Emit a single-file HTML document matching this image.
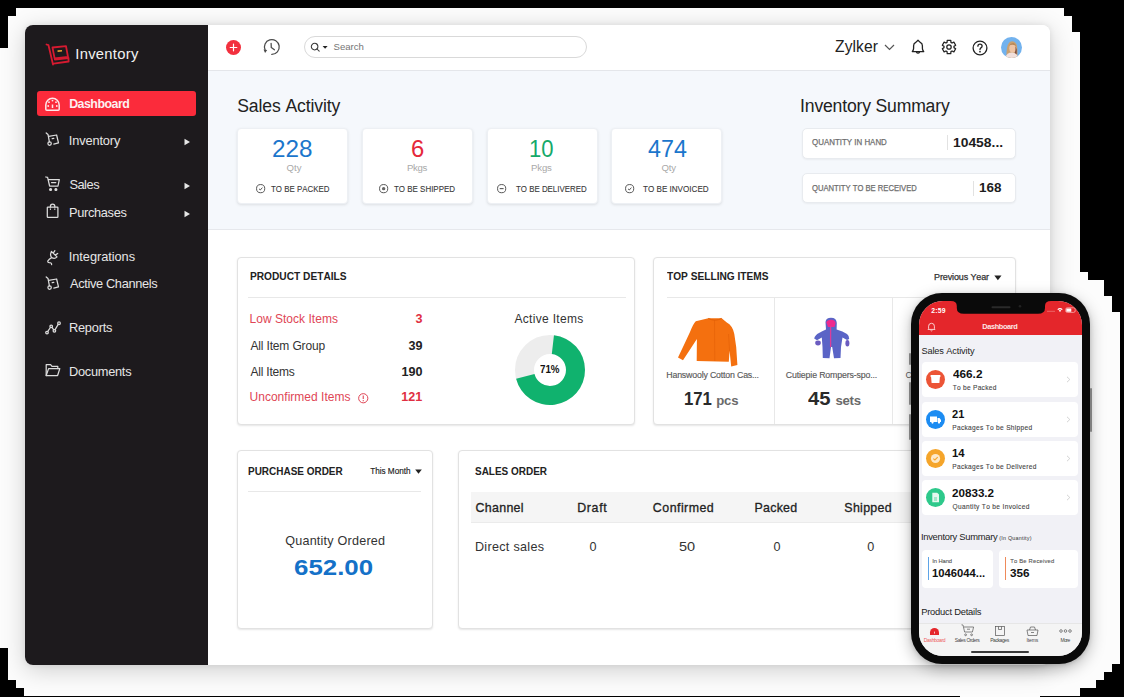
<!DOCTYPE html>
<html><head><meta charset="utf-8"><style>
*{box-sizing:border-box}
html,body{margin:0;padding:0}
body{width:1124px;height:697px;overflow:hidden;background:#fcfcfc;position:relative;font-family:"Liberation Sans",sans-serif}
.a{position:absolute}
.t{position:absolute;white-space:nowrap;line-height:1.117;font-kerning:none;font-family:"Liberation Sans",sans-serif}
svg{position:absolute;overflow:visible}
</style></head><body>
<div class="a" id="win" style="left:25px;top:25px;width:1025px;height:640px;background:#fff;border-radius:8px;box-shadow:0 5px 24px rgba(0,0,0,0.19),0 0 6px rgba(0,0,0,0.08);overflow:hidden"><div class="a" style="left:0px;top:0px;width:183px;height:640px;background:#1d1a1d"></div>
<div class="a" style="left:183px;top:0px;width:842px;height:46px;background:#fff;border-bottom:1px solid #e4e6ea"></div>
<div class="a" style="left:183px;top:46px;width:842px;height:159px;background:#f5f8fc;border-bottom:1px solid #e6e8ec"></div>
</div><svg style="left:44px;top:42px" width="28" height="28" viewBox="0 0 28 28">
<g fill="none" stroke="#d61a30" stroke-width="1.8" stroke-linejoin="round" stroke-linecap="round">
<path d="M2.5 2.5 L4.5 3.2 L9 22.5"/>
<path d="M8.5 5.5 L22 4.2 L24 15 L10.6 16.4 Z"/>
<path d="M10.8 17.5 L24.5 16 L24.6 19.5 L9.6 21.6"/>
</g>
<path d="M13.5 8.3 L18 7.9 L18.1 9.6 L13.6 10 Z" fill="#e8a030"/>
</svg><div class="t" style="left:75.33px;top:46.00px;font-size:14.8px;color:#f2f2f2;letter-spacing:0.265px;">Inventory</div>
<div class="a" style="left:37px;top:91px;width:159px;height:25px;background:#fb2b3b;border-radius:3px"></div>
<svg style="left:44px;top:96px" width="17" height="16" viewBox="0 0 17 16">
<g fill="none" stroke="#fde8ea" stroke-width="1.5">
<path d="M1.8 13.2 L1.8 9 A6.7 6.7 0 0 1 15.2 9 L15.2 13.2 Q15.2 14.2 14.2 14.2 L2.8 14.2 Q1.8 14.2 1.8 13.2 Z"/>
<path d="M8.5 8.5 L8.5 12"/>
</g>
<g fill="#fde8ea"><circle cx="8.5" cy="4.6" r="0.9"/><circle cx="5" cy="6.2" r="0.9"/><circle cx="12" cy="6.2" r="0.9"/><circle cx="4.2" cy="10" r="0.9"/><circle cx="12.8" cy="10" r="0.9"/></g>
</svg><div class="t" style="left:69.17px;top:98.00px;font-size:12.4px;color:#fdf0f1;font-weight:700;letter-spacing:-0.515px;">Dashboard</div>
<div class="t" style="left:68.82px;top:134.00px;font-size:12.8px;color:#e6e6e6;letter-spacing:-0.143px;">Inventory</div>
<svg style="left:184px;top:137.5px" width="7" height="8" viewBox="0 0 7 8"><path d="M0.5 0.8 L6 4 L0.5 7.2 Z" fill="#e6e6e6"/></svg>
<div class="t" style="left:69.42px;top:178.00px;font-size:12.8px;color:#e6e6e6;letter-spacing:-0.469px;">Sales</div>
<svg style="left:184px;top:181.5px" width="7" height="8" viewBox="0 0 7 8"><path d="M0.5 0.8 L6 4 L0.5 7.2 Z" fill="#e6e6e6"/></svg>
<div class="t" style="left:68.95px;top:206.00px;font-size:12.8px;color:#e6e6e6;letter-spacing:-0.320px;">Purchases</div>
<svg style="left:184px;top:209.5px" width="7" height="8" viewBox="0 0 7 8"><path d="M0.5 0.8 L6 4 L0.5 7.2 Z" fill="#e6e6e6"/></svg>
<div class="t" style="left:68.82px;top:250.00px;font-size:12.8px;color:#e6e6e6;letter-spacing:-0.059px;">Integrations</div>
<div class="t" style="left:69.97px;top:277.00px;font-size:12.8px;color:#e6e6e6;letter-spacing:-0.343px;">Active Channels</div>
<div class="t" style="left:68.95px;top:321.00px;font-size:12.8px;color:#e6e6e6;letter-spacing:-0.218px;">Reports</div>
<div class="t" style="left:68.95px;top:365.00px;font-size:12.8px;color:#e6e6e6;letter-spacing:-0.266px;">Documents</div>
<svg style="left:43px;top:130px" width="20" height="20" viewBox="0 0 20 20"><g fill="none" stroke="#dcdcdc" stroke-width="1.25" stroke-linecap="round" stroke-linejoin="round"><path d="M3.2 2.9 L5 4.4 L6.4 11.8"/><circle cx="6.6" cy="13.6" r="1.7"/><path d="M5.7 6.4 L13.6 5 L15.5 12.9 L10.8 14.2"/><path d="M9.2 8.7 L10.8 8.4"/></g></svg>
<svg style="left:43px;top:274px" width="20" height="20" viewBox="0 0 20 20"><g fill="none" stroke="#dcdcdc" stroke-width="1.25" stroke-linecap="round" stroke-linejoin="round"><path d="M3.2 2.9 L5 4.4 L6.4 11.8"/><circle cx="6.6" cy="13.6" r="1.7"/><path d="M5.7 6.4 L13.6 5 L15.5 12.9 L10.8 14.2"/><path d="M9.2 8.7 L10.8 8.4"/></g></svg>
<svg style="left:45px;top:175.5px" width="16" height="16" viewBox="0 0 16 16"><g fill="none" stroke="#dcdcdc" stroke-width="1.25" stroke-linecap="round" stroke-linejoin="round"><path d="M0.8 1 L2.6 1.3 L4.6 10 L13 10 L14.3 3.6 L3.4 3.6"/><path d="M6.5 6.6 L10.8 6.6"/><circle cx="5.6" cy="13.5" r="0.95" fill="#dcdcdc"/><circle cx="10.9" cy="13.5" r="0.95" fill="#dcdcdc"/></g></svg>
<svg style="left:46px;top:202.5px" width="14" height="16" viewBox="0 0 14 16"><g fill="none" stroke="#dcdcdc" stroke-width="1.25" stroke-linecap="round" stroke-linejoin="round"><rect x="1.3" y="4" width="10.6" height="10.4" rx="0.6"/><path d="M4.4 4 L4.4 3.3 A2.2 2.2 0 0 1 8.8 3.3 L8.8 4"/><path d="M4.4 5.8 L4.4 6.6 M8.8 5.8 L8.8 6.6" stroke-width="1"/></g></svg>
<svg style="left:43px;top:246px" width="20" height="22" viewBox="0 0 20 22"><g fill="none" stroke="#dcdcdc" stroke-width="1.25" stroke-linecap="round" stroke-linejoin="round"><path d="M8.4 5.4 L14 10.9 Q12 13 9.2 11.9 Q6.4 10 8.4 5.4 Z"/><path d="M10.4 6.9 L11.9 4.7 M12.5 8.9 L14.7 7.5"/><path d="M8.4 11.8 Q6 13.4 4.9 14.8 Q4.3 16.4 6.3 16.6 Q8.8 16.7 8.6 18.6"/></g></svg>
<svg style="left:44.5px;top:320.5px" width="16" height="14" viewBox="0 0 16 14"><g fill="none" stroke="#dcdcdc" stroke-width="1.25" stroke-linecap="round" stroke-linejoin="round"><circle cx="2" cy="11.6" r="1.3"/><circle cx="6.2" cy="5.3" r="1.3"/><circle cx="9.4" cy="9.8" r="1.3"/><circle cx="14" cy="2.2" r="1.3"/><path d="M2.8 10.4 L5.4 6.5 M7 6.4 L8.6 8.7 M10.1 8.6 L13.2 3.4"/></g></svg>
<svg style="left:44.5px;top:363px" width="16" height="14" viewBox="0 0 16 14"><g fill="none" stroke="#dcdcdc" stroke-width="1.25" stroke-linecap="round" stroke-linejoin="round"><path d="M1.2 12.5 L1.2 1.6 L5.6 1.6 L7 3.4 L12.8 3.4 L12.8 5.6"/><path d="M1.2 12.5 L3.6 5.6 L14.8 5.6 L12.6 12.5 Z"/></g></svg>
<div class="a" style="left:226px;top:40px;width:15px;height:15px;border-radius:50%;background:#f2303e"></div>
<svg style="left:226px;top:40px" width="15" height="15" viewBox="0 0 15 15"><path d="M7.5 4.2 L7.5 10.8 M4.2 7.5 L10.8 7.5" stroke="#fff" stroke-width="1.2" stroke-linecap="round"/></svg>
<svg style="left:262px;top:38px" width="20" height="20" viewBox="0 0 20 20"><g fill="none" stroke="#4a4a4a" stroke-width="1.25" stroke-linecap="round" stroke-linejoin="round">
<path d="M9.8 16.4 A7.4 7.4 0 1 0 3.1 12.1"/><path d="M9.1 5.3 L9.3 9.6 L12.4 11.8"/></g><path d="M1.5 11.6 L5.2 12.1 L3.1 15.1 Z" fill="#4a4a4a"/></svg><div class="a" style="left:304px;top:36px;width:283px;height:22px;border:1px solid #d9d9d9;border-radius:11px;background:#fff"></div>
<svg style="left:310px;top:42px" width="20" height="11" viewBox="0 0 20 11"><g fill="none" stroke="#3a3a3a" stroke-width="1.05"><circle cx="4.6" cy="4.6" r="3.3"/><path d="M7 7 L9.2 9.2" stroke-linecap="round"/></g><path d="M12.6 4 L17.6 4 L15.1 6.8 Z" fill="#222"/></svg><div class="t" style="left:333.56px;top:42.00px;font-size:9.6px;color:#757575;letter-spacing:-0.012px;">Search</div>
<div class="t" style="left:835.00px;top:38.00px;font-size:15.6px;color:#222;letter-spacing:0.100px;">Zylker</div>
<svg style="left:884px;top:44px" width="11" height="7" viewBox="0 0 11 7"><path d="M1 1 L5.5 5.5 L10 1" fill="none" stroke="#555" stroke-width="1.2"/></svg>
<svg style="left:910px;top:39px" width="16" height="17" viewBox="0 0 16 17"><g fill="none" stroke="#222" stroke-width="1.3" stroke-linejoin="round">
<path d="M2.3 12.6 L3.2 11.2 Q3.6 10.2 3.6 9 L3.6 6.8 Q3.6 4.4 5.8 3.4 L8 1.3 L10.2 3.4 Q12.4 4.4 12.4 6.8 L12.4 9 Q12.4 10.2 12.8 11.2 L13.7 12.6 Z"/><path d="M6.3 13 Q8 15.4 9.7 13"/></g></svg><svg style="left:940.5px;top:39.2px" width="16" height="16" viewBox="0 0 16 16"><g fill="none" stroke="#222" stroke-width="1.25" stroke-linejoin="round"><path d="M6.05 3.39 L6.23 1.33 L9.77 1.33 L9.95 3.39 L11.01 4.01 L12.89 3.13 L14.66 6.20 L12.96 7.38 L12.96 8.62 L14.66 9.80 L12.89 12.87 L11.01 11.99 L9.95 12.61 L9.77 14.67 L6.23 14.67 L6.05 12.61 L4.99 11.99 L3.11 12.87 L1.34 9.80 L3.04 8.62 L3.04 7.38 L1.34 6.20 L3.11 3.13 L4.99 4.01 Z"/><circle cx="8" cy="8" r="2.2"/></g></svg><svg style="left:972px;top:39.5px" width="16" height="16" viewBox="0 0 16 16"><circle cx="8" cy="8" r="6.9" fill="none" stroke="#222" stroke-width="1.3"/>
<path d="M5.9 6.2 Q5.9 4.1 8 4.1 Q10.1 4.1 10.1 6 Q10.1 7.2 8.9 7.9 Q8 8.4 8 9.6" fill="none" stroke="#222" stroke-width="1.3" stroke-linecap="round"/><circle cx="8" cy="11.7" r="0.85" fill="#222"/></svg><svg style="left:1001px;top:36.6px" width="21" height="21" viewBox="0 0 21 21">
<defs><clipPath id="av"><circle cx="10.5" cy="10.5" r="10.5"/></clipPath></defs>
<g clip-path="url(#av)"><rect width="21" height="21" fill="#72b2ee"/>
<path d="M5.5 21 Q5.2 13 6.6 8.5 Q8.2 4 11.5 4.2 Q15 4.6 16 9 Q16.8 14 16.2 21 Z" fill="#c9a070"/>
<ellipse cx="11.6" cy="11.2" rx="3.3" ry="4.3" fill="#f0c4a4"/>
<path d="M8 8.6 Q9.5 5.6 12.6 6 Q14.8 6.6 15.2 9.5 Q13.8 7.6 11.5 7.7 Q9.4 7.9 8 8.6 Z" fill="#b88858"/>
<path d="M14.5 9 Q16.2 12 15.6 17 L13.6 17 Q15 13 14.5 9 Z" fill="#7a4a40"/>
<path d="M4 21 Q6 15.6 10.8 15.6 Q15.5 15.6 17.5 21 Z" fill="#f2e0dc"/>
</g></svg><div class="t" style="left:237.20px;top:97.00px;font-size:17.6px;color:#222;letter-spacing:-0.117px;">Sales Activity</div>
<div class="a" style="left:237px;top:127.5px;width:110.5px;height:76px;background:#fff;border-radius:4px;border:1px solid #edf0f4;box-shadow:0 1px 3px rgba(0,0,0,0.10)"></div>
<div class="t" style="left:272.48px;top:136.00px;font-size:23.5px;color:#1b76cc;transform:scaleX(1.0323);transform-origin:0 0;">228</div>
<div class="t" style="left:286.45px;top:163.00px;font-size:9.6px;color:#a9a9a9;letter-spacing:0.120px;">Qty</div>
<div class="t" style="left:270.92px;top:185.00px;font-size:8.8px;color:#383838;transform:scaleX(0.8988);transform-origin:0 0;-webkit-text-stroke:0.1px currentColor;">TO BE PACKED</div>
<svg style="left:255.8px;top:183.9px" width="9.3" height="9.3" viewBox="0 0 9.3 9.3"><circle cx="4.65" cy="4.65" r="4.1" fill="none" stroke="#444" stroke-width="0.9"/><path d="M3 4.8 L4.3 6 L6.4 3.6" fill="none" stroke="#444" stroke-width="0.9"/></svg>
<div class="a" style="left:362px;top:127.5px;width:110.5px;height:76px;background:#fff;border-radius:4px;border:1px solid #edf0f4;box-shadow:0 1px 3px rgba(0,0,0,0.10)"></div>
<div class="t" style="left:410.69px;top:136.00px;font-size:23.5px;color:#e5283a;transform:scaleX(1.0144);transform-origin:0 0;">6</div>
<div class="t" style="left:407.01px;top:163.00px;font-size:9.6px;color:#a9a9a9;letter-spacing:-0.303px;">Pkgs</div>
<div class="t" style="left:394.32px;top:185.00px;font-size:8.8px;color:#383838;transform:scaleX(0.9048);transform-origin:0 0;-webkit-text-stroke:0.1px currentColor;">TO BE SHIPPED</div>
<svg style="left:378.9px;top:183.9px" width="9.3" height="9.3" viewBox="0 0 9.3 9.3"><circle cx="4.65" cy="4.65" r="4.1" fill="none" stroke="#444" stroke-width="0.9"/><circle cx="4.65" cy="4.65" r="1.7" fill="#666"/></svg>
<div class="a" style="left:487px;top:127.5px;width:110.5px;height:76px;background:#fff;border-radius:4px;border:1px solid #edf0f4;box-shadow:0 1px 3px rgba(0,0,0,0.10)"></div>
<div class="t" style="left:528.92px;top:136.00px;font-size:23.5px;color:#15a96a;transform:scaleX(0.9389);transform-origin:0 0;">10</div>
<div class="t" style="left:531.01px;top:163.00px;font-size:9.6px;color:#a9a9a9;letter-spacing:-0.136px;">Pkgs</div>
<div class="t" style="left:516.02px;top:185.00px;font-size:8.8px;color:#383838;transform:scaleX(0.8974);transform-origin:0 0;-webkit-text-stroke:0.1px currentColor;">TO BE DELIVERED</div>
<svg style="left:497px;top:183.9px" width="9.3" height="9.3" viewBox="0 0 9.3 9.3"><circle cx="4.65" cy="4.65" r="4.1" fill="none" stroke="#444" stroke-width="0.9"/><path d="M2.7 4.65 L6.6 4.65" stroke="#444" stroke-width="1"/></svg>
<div class="a" style="left:611px;top:127.5px;width:110.5px;height:76px;background:#fff;border-radius:4px;border:1px solid #edf0f4;box-shadow:0 1px 3px rgba(0,0,0,0.10)"></div>
<div class="t" style="left:648.16px;top:136.00px;font-size:23.5px;color:#1b76cc;transform:scaleX(0.9926);transform-origin:0 0;">474</div>
<div class="t" style="left:661.45px;top:163.00px;font-size:9.6px;color:#a9a9a9;letter-spacing:-0.130px;">Qty</div>
<div class="t" style="left:643.12px;top:185.00px;font-size:8.8px;color:#383838;transform:scaleX(0.9199);transform-origin:0 0;-webkit-text-stroke:0.1px currentColor;">TO BE INVOICED</div>
<svg style="left:624.9px;top:183.9px" width="9.3" height="9.3" viewBox="0 0 9.3 9.3"><circle cx="4.65" cy="4.65" r="4.1" fill="none" stroke="#444" stroke-width="0.9"/><path d="M3 4.8 L4.3 6 L6.4 3.6" fill="none" stroke="#444" stroke-width="0.9"/></svg>
<div class="t" style="left:800.08px;top:97.00px;font-size:17.6px;color:#222;letter-spacing:-0.183px;">Inventory Summary</div>
<div class="a" style="left:801.5px;top:127.5px;width:214px;height:31px;background:#fff;border-radius:5px;border:1px solid #e8ebef;box-shadow:0 1px 2px rgba(0,0,0,0.05)"></div>
<div class="a" style="left:801.5px;top:172.5px;width:214px;height:30px;background:#fff;border-radius:5px;border:1px solid #e8ebef;box-shadow:0 1px 2px rgba(0,0,0,0.05)"></div>
<div class="t" style="left:811.62px;top:138.00px;font-size:8.4px;color:#6f6f6f;transform:scaleX(0.9461);transform-origin:0 0;-webkit-text-stroke:0.25px currentColor;">QUANTITY IN HAND</div>
<div class="a" style="left:947.3px;top:135px;width:1px;height:15px;background:#e2e2e2"></div>
<div class="t" style="left:952.63px;top:136.00px;font-size:13.4px;color:#1d1d1d;font-weight:700;transform:scaleX(1.0350);transform-origin:0 0;-webkit-text-stroke:0px;">10458...</div>
<div class="t" style="left:811.64px;top:184.00px;font-size:8.4px;color:#6f6f6f;transform:scaleX(0.9119);transform-origin:0 0;-webkit-text-stroke:0.25px currentColor;">QUANTITY TO BE RECEIVED</div>
<div class="a" style="left:973.3px;top:181px;width:1px;height:15px;background:#e2e2e2"></div>
<div class="t" style="left:979.15px;top:181.00px;font-size:13.4px;color:#1d1d1d;font-weight:700;transform:scaleX(1.0047);transform-origin:0 0;">168</div>
<div class="a" style="left:237px;top:257px;width:398px;height:168px;background:#fff;border:1px solid #e2e2e2;border-radius:4px;box-shadow:0 1px 2px rgba(0,0,0,0.10)"></div>
<div class="a" style="left:653px;top:257px;width:363px;height:168px;background:#fff;border:1px solid #e2e2e2;border-radius:4px;box-shadow:0 1px 2px rgba(0,0,0,0.10)"></div>
<div class="a" style="left:237px;top:450px;width:196px;height:179px;background:#fff;border:1px solid #e2e2e2;border-radius:4px;box-shadow:0 1px 2px rgba(0,0,0,0.10)"></div>
<div class="a" style="left:458px;top:450px;width:470px;height:179px;background:#fff;border:1px solid #e2e2e2;border-radius:4px;box-shadow:0 1px 2px rgba(0,0,0,0.10)"></div>
<div class="t" style="left:249.62px;top:271.00px;font-size:10.4px;color:#222;font-weight:700;transform:scaleX(0.9785);transform-origin:0 0;">PRODUCT DETAILS</div>
<div class="a" style="left:248px;top:296.5px;width:378px;height:1px;background:#e8e8e8"></div>
<div class="t" style="left:249.52px;top:313.00px;font-size:12px;color:#e04656;letter-spacing:0.028px;">Low Stock Items</div>
<div class="t" style="left:415.45px;top:312.00px;font-size:12.6px;color:#e02f42;font-weight:700;">3</div>
<div class="t" style="left:250.48px;top:340.00px;font-size:12px;color:#333;letter-spacing:-0.159px;">All Item Group</div>
<div class="t" style="left:408.45px;top:339.00px;font-size:12.6px;color:#222;font-weight:700;">39</div>
<div class="t" style="left:250.48px;top:366.00px;font-size:12px;color:#333;letter-spacing:-0.206px;">All Items</div>
<div class="t" style="left:401.49px;top:365.00px;font-size:12.6px;color:#222;font-weight:700;">190</div>
<div class="t" style="left:249.57px;top:391.00px;font-size:12px;color:#e04656;letter-spacing:0.010px;">Unconfirmed Items</div>
<div class="t" style="left:401.33px;top:390.00px;font-size:12.6px;color:#e02f42;font-weight:700;">121</div>
<svg style="left:357.7px;top:392.6px" width="10.5" height="10.5" viewBox="0 0 10.5 10.5"><circle cx="5.25" cy="5.25" r="4.6" fill="none" stroke="#e04656" stroke-width="1"/><path d="M5.25 2.6 L5.25 6" stroke="#e04656" stroke-width="1.1"/><circle cx="5.25" cy="7.7" r="0.65" fill="#e04656"/></svg>
<div class="t" style="left:514.48px;top:313.00px;font-size:12px;color:#333;letter-spacing:0.310px;">Active Items</div>
<svg style="left:0;top:0" width="1124" height="697" viewBox="0 0 1124 697">
<circle cx="550" cy="370" r="25.5" fill="none" stroke="#ededed" stroke-width="19"/>
<path d="M553.96 335.22 A35 35 0 1 1 516.10 378.70 L534.50 373.98 A16 16 0 1 0 551.81 354.10 Z" fill="#10b26e"/>
</svg><div class="t" style="left:540.28px;top:364.00px;font-size:10.2px;color:#111;font-weight:700;transform:scaleX(0.9590);transform-origin:0 0;">71%</div>
<div class="t" style="left:666.79px;top:271.00px;font-size:10.4px;color:#222;font-weight:700;transform:scaleX(0.9770);transform-origin:0 0;">TOP SELLING ITEMS</div>
<div class="t" style="left:934.06px;top:272.00px;font-size:9px;color:#333;letter-spacing:-0.128px;-webkit-text-stroke:0.25px currentColor;">Previous Year</div>
<svg style="left:993.5px;top:274.5px" width="8" height="6" viewBox="0 0 8 6"><path d="M0.3 0.5 L7.5 0.5 L3.9 5.3 Z" fill="#222"/></svg>
<div class="a" style="left:667px;top:296.5px;width:348px;height:1px;background:#e8e8e8"></div>
<div class="a" style="left:773.5px;top:297px;width:1px;height:127px;background:#e8e8e8"></div>
<div class="a" style="left:891.5px;top:297px;width:1px;height:127px;background:#e8e8e8"></div>
<div class="t" style="left:666.28px;top:371.00px;font-size:8.8px;color:#5a5a5a;letter-spacing:-0.183px;-webkit-text-stroke:0.15px currentColor;">Hanswooly Cotton Cas...</div>
<div class="t" style="left:785.85px;top:371.00px;font-size:8.8px;color:#5a5a5a;letter-spacing:-0.156px;-webkit-text-stroke:0.15px currentColor;">Cutiepie Rompers-spo...</div>
<div class="t" style="left:905.55px;top:371.00px;font-size:8.8px;color:#5a5a5a;">C</div>
<div class="t" style="left:683.75px;top:389.00px;font-size:18.6px;color:#2a2a2a;font-weight:700;transform:scaleX(0.8997);transform-origin:0 0;">171</div>
<div class="t" style="left:716.13px;top:394.00px;font-size:13.2px;color:#6a6a6a;font-weight:700;letter-spacing:-0.117px;">pcs</div>
<div class="t" style="left:808.09px;top:389.00px;font-size:18.6px;color:#2a2a2a;font-weight:700;transform:scaleX(1.0860);transform-origin:0 0;">45</div>
<div class="t" style="left:835.54px;top:394.00px;font-size:13.2px;color:#6a6a6a;font-weight:700;letter-spacing:-0.305px;">sets</div>
<svg style="left:670px;top:310px" width="80" height="60" viewBox="0 0 80 60">
<path d="M38.3 8.2 L51.7 8.2 L56.8 12.6 Q62.5 15.5 64.3 24 L66.2 37 L67.4 55 L61.2 56.6 L59.6 41 L58.8 51.8 L26.7 51 L26.9 29 L13 50.2 L8 47.4 Q14 35 20 22 Q23 14 25.8 11.2 Z" fill="#f4700f"/>
<path d="M38.3 8.4 Q45 12 51.6 8.4" fill="none" stroke="#e05e05" stroke-width="0.9"/>
<path d="M44.5 10 L44.8 51" stroke="#e25f06" stroke-width="0.6"/>
<path d="M59.6 41 L58.5 24" stroke="#e25f06" stroke-width="0.6"/>
</svg><svg style="left:805px;top:310px" width="55" height="55" viewBox="0 0 55 55">
<path d="M20.5 12 Q21 7.8 26 7.8 Q31.5 7.8 31.8 13 L31.6 19.5 Q38 21 42 24 Q44.5 26 44.2 29 L42 30 L37.5 27.5 L36 37 L35.5 48 L29 48.3 L27.2 37 L26 37 L24.5 48.3 L17.8 48 L17.5 37 L16.8 27.6 L12 30.2 L9.2 28.5 Q10 25 14 23 Q18 20.5 21 19.5 Z" fill="#5a64c6"/>
<path d="M21.3 12.5 Q22 9.8 26 9.8 Q30 9.8 30.6 13 L29.5 17 L23 17 Z" fill="#ee2a8e"/>
<path d="M25.6 16 L25.6 37" stroke="#dd3c9a" stroke-width="1.3"/>
<ellipse cx="13" cy="33" rx="2.8" ry="2.4" fill="#6b5cc0"/>
<ellipse cx="42.4" cy="33.3" rx="2" ry="3.2" fill="#6b5cc0"/>
</svg><div class="t" style="left:247.53px;top:466.00px;font-size:10.4px;color:#222;font-weight:700;transform:scaleX(0.9591);transform-origin:0 0;">PURCHASE ORDER</div>
<div class="t" style="left:370.32px;top:467.00px;font-size:8.2px;color:#222;letter-spacing:-0.038px;-webkit-text-stroke:0.15px currentColor;">This Month</div>
<svg style="left:414.5px;top:468.5px" width="7" height="6" viewBox="0 0 7 6"><path d="M0.2 0.6 L6.8 0.6 L3.5 4.8 Z" fill="#222"/></svg>
<div class="a" style="left:248px;top:491px;width:173px;height:1px;background:#e8e8e8"></div>
<div class="t" style="left:285.20px;top:534.00px;font-size:12.6px;color:#333;letter-spacing:0.217px;">Quantity Ordered</div>
<div class="t" style="left:293.85px;top:555.00px;font-size:22.6px;color:#1471c8;font-weight:700;transform:scaleX(1.1444);transform-origin:0 0;">652.00</div>
<div class="t" style="left:475.21px;top:466.00px;font-size:10.4px;color:#222;font-weight:700;transform:scaleX(0.9597);transform-origin:0 0;">SALES ORDER</div>
<div class="a" style="left:471px;top:491.5px;width:450px;height:31.5px;background:#f5f5f5;border-bottom:1px solid #ebebeb"></div>
<div class="t" style="left:475.47px;top:502.00px;font-size:12.4px;color:#222;letter-spacing:0.328px;-webkit-text-stroke:0.3px currentColor;">Channel</div>
<div class="t" style="left:577.28px;top:502.00px;font-size:12.4px;color:#222;letter-spacing:0.634px;-webkit-text-stroke:0.3px currentColor;">Draft</div>
<div class="t" style="left:652.87px;top:502.00px;font-size:12.4px;color:#222;letter-spacing:0.466px;-webkit-text-stroke:0.3px currentColor;">Confirmed</div>
<div class="t" style="left:754.48px;top:502.00px;font-size:12.4px;color:#222;letter-spacing:0.271px;-webkit-text-stroke:0.3px currentColor;">Packed</div>
<div class="t" style="left:844.34px;top:502.00px;font-size:12.4px;color:#222;letter-spacing:0.309px;-webkit-text-stroke:0.3px currentColor;">Shipped</div>
<div class="t" style="left:474.97px;top:540.00px;font-size:12.6px;color:#333;letter-spacing:0.297px;">Direct sales</div>
<div class="t" style="left:589.51px;top:540.00px;font-size:12.6px;color:#333;">0</div>
<div class="t" style="left:679.42px;top:540.00px;font-size:12.6px;color:#333;transform:scaleX(1.1522);transform-origin:0 0;">50</div>
<div class="t" style="left:773.51px;top:540.00px;font-size:12.6px;color:#333;">0</div>
<div class="t" style="left:867.31px;top:540.00px;font-size:12.6px;color:#333;">0</div>
<div class="a" style="left:911px;top:292.5px;width:179px;height:371.5px;border-radius:31px;background:#0a0a0a;box-shadow:0 5px 16px rgba(0,0,0,0.28),0 1px 4px rgba(0,0,0,0.15);z-index:10"></div>
<div class="a" style="left:909px;top:352.5px;width:2px;height:12px;background:#808080;border-radius:1px;z-index:11"></div>
<div class="a" style="left:909px;top:382px;width:2px;height:22.5px;background:#808080;border-radius:1px;z-index:11"></div>
<div class="a" style="left:909px;top:414px;width:2px;height:26px;background:#808080;border-radius:1px;z-index:11"></div>
<div class="a" style="left:1090px;top:387.5px;width:2px;height:44px;background:#808080;border-radius:1px;z-index:11"></div>
<div class="a" style="left:918.5px;top:300.5px;width:163.5px;height:355.3px;border-radius:24px;overflow:hidden;z-index:11"><div class="a" style="left:0px;top:0px;width:163.5px;height:355.3px;background:#f1f1f6"></div>
<div class="a" style="left:0px;top:0px;width:163.5px;height:34.5px;background:#e4262b"></div>
<svg style="left:0;top:0" width="163.5" height="20" viewBox="0 0 163.5 20"><path d="M31.799999999999955 0 Q37.799999999999955 0 37.799999999999955 5 L37.799999999999955 7 Q37.799999999999955 12.8 44.799999999999955 12.8 L119.0 12.8 Q126.0 12.8 126.0 7 L126.0 5 Q126.0 0 132.0 0 Z" fill="#0a0a0a"/><rect x="72.5" y="5.2" width="19" height="2" rx="1" fill="#2a2a2a"/><circle cx="101.0" cy="5.3" r="1.3" fill="#222"/></svg>
<div class="t" style="left:12.86px;top:6.00px;font-size:6.8px;color:#fff;font-weight:700;letter-spacing:0.193px;">2:59</div>
<svg style="left:128.5px;top:6.5px" width="30" height="7" viewBox="0 0 30 7"><rect x="0" y="3.8" width="8" height="1" fill="#f08080" opacity="0.7"/><path d="M10.3 2.2 Q13 -0.4 15.7 2.2 L14.8 3.1 Q13 1.4 11.2 3.1 Z M11.7 3.6 Q13 2.4 14.3 3.6 L13 5 Z" fill="#fff"/><rect x="18.7" y="0.8" width="9.5" height="4.6" rx="1.6" fill="none" stroke="#f6b0b0" stroke-width="0.8"/><rect x="19.3" y="1.4" width="5" height="3.4" rx="0.5" fill="#fff"/></svg>
<svg style="left:8.0px;top:21.30000000000001px" width="9" height="9.5" viewBox="0 0 9 9.5"><g fill="none" stroke="#fde0e0" stroke-width="0.9"><path d="M1 7.4 L1.6 6.5 L1.6 4.2 A2.9 2.9 0 0 1 7.4 4.2 L7.4 6.5 L8 7.4 Z"/><path d="M3.6 8.4 Q4.5 9.4 5.4 8.4"/></g></svg>
<div class="t" style="left:63.80px;top:22.00px;font-size:7.4px;color:#fde6e6;font-weight:700;letter-spacing:-0.396px;">Dashboard</div>
<div class="t" style="left:2.88px;top:45.00px;font-size:9.2px;color:#222;letter-spacing:-0.113px;">Sales Activity</div>
<div class="a" style="left:3.2999999999999545px;top:61.5px;width:156.6px;height:35px;background:#fff;border-radius:4px"></div>
<div class="a" style="left:7.7999999999999545px;top:69.5px;width:19px;height:19px;border-radius:50%;background:#ec5436"></div>
<svg style="left:7.7999999999999545px;top:69.5px" width="19" height="19" viewBox="0 0 19 19"><path d="M5 6 L14 6 L13.4 13 L5.6 13 Z M4.6 5 L14.4 5 L14.4 7 L4.6 7 Z" fill="#fff"/></svg>
<div class="t" style="left:34.12px;top:68.00px;font-size:10.6px;color:#111;font-weight:700;transform:scaleX(1.1102);transform-origin:0 0;">466.2</div>
<div class="t" style="left:34.15px;top:83.00px;font-size:6.6px;color:#444;letter-spacing:0.277px;-webkit-text-stroke:0.1px currentColor;">To be Packed</div>
<svg style="left:147.5px;top:75.5px" width="5" height="7" viewBox="0 0 5 7"><path d="M1 0.8 L3.8 3.5 L1 6.2" fill="none" stroke="#c8c8c8" stroke-width="0.8"/></svg>
<div class="a" style="left:3.2999999999999545px;top:101.10000000000002px;width:156.6px;height:35px;background:#fff;border-radius:4px"></div>
<div class="a" style="left:7.7999999999999545px;top:109.10000000000002px;width:19px;height:19px;border-radius:50%;background:#1c8cf2"></div>
<svg style="left:7.7999999999999545px;top:109.10000000000002px" width="19" height="19" viewBox="0 0 19 19"><path d="M4 6.5 L11 6.5 L11 12 L4 12 Z M11.5 8 L13.5 8 L15 10 L15 12 L11.5 12 Z" fill="#fff"/><circle cx="6.5" cy="12.6" r="1.1" fill="#fff"/><circle cx="13" cy="12.6" r="1.1" fill="#fff"/></svg>
<div class="t" style="left:33.92px;top:108.00px;font-size:10.6px;color:#111;font-weight:700;transform:scaleX(1.0424);transform-origin:0 0;">21</div>
<div class="t" style="left:33.76px;top:123.00px;font-size:6.6px;color:#444;letter-spacing:0.296px;-webkit-text-stroke:0.1px currentColor;">Packages To be Shipped</div>
<svg style="left:147.5px;top:115.10000000000002px" width="5" height="7" viewBox="0 0 5 7"><path d="M1 0.8 L3.8 3.5 L1 6.2" fill="none" stroke="#c8c8c8" stroke-width="0.8"/></svg>
<div class="a" style="left:3.2999999999999545px;top:140.5px;width:156.6px;height:35px;background:#fff;border-radius:4px"></div>
<div class="a" style="left:7.7999999999999545px;top:148.5px;width:19px;height:19px;border-radius:50%;background:#f5a52a"></div>
<svg style="left:7.7999999999999545px;top:148.5px" width="19" height="19" viewBox="0 0 19 19"><circle cx="9.5" cy="9.5" r="4.6" fill="#fde9c8"/><path d="M7.3 9.6 L8.9 11 L11.7 8.2" fill="none" stroke="#f5a52a" stroke-width="1.1"/></svg>
<div class="t" style="left:33.59px;top:147.00px;font-size:10.6px;color:#111;font-weight:700;transform:scaleX(1.0663);transform-origin:0 0;">14</div>
<div class="t" style="left:33.76px;top:162.00px;font-size:6.6px;color:#444;letter-spacing:0.294px;-webkit-text-stroke:0.1px currentColor;">Packages To be Delivered</div>
<svg style="left:147.5px;top:154.5px" width="5" height="7" viewBox="0 0 5 7"><path d="M1 0.8 L3.8 3.5 L1 6.2" fill="none" stroke="#c8c8c8" stroke-width="0.8"/></svg>
<div class="a" style="left:3.2999999999999545px;top:179.89999999999998px;width:156.6px;height:35px;background:#fff;border-radius:4px"></div>
<div class="a" style="left:7.7999999999999545px;top:187.89999999999998px;width:19px;height:19px;border-radius:50%;background:#2ec98b"></div>
<svg style="left:7.7999999999999545px;top:187.89999999999998px" width="19" height="19" viewBox="0 0 19 19"><path d="M6.3 4.8 L11.2 4.8 L13 6.6 L13 14.2 L6.3 14.2 Z" fill="#e6f8ef"/><path d="M8 10 L11 10 M8 12 L11 12" stroke="#2ec98b" stroke-width="0.7"/></svg>
<div class="t" style="left:33.90px;top:187.00px;font-size:10.6px;color:#111;font-weight:700;transform:scaleX(1.0980);transform-origin:0 0;">20833.2</div>
<div class="t" style="left:33.99px;top:202.00px;font-size:6.6px;color:#444;letter-spacing:0.329px;-webkit-text-stroke:0.1px currentColor;">Quantity To be Invoiced</div>
<svg style="left:147.5px;top:193.89999999999998px" width="5" height="7" viewBox="0 0 5 7"><path d="M1 0.8 L3.8 3.5 L1 6.2" fill="none" stroke="#c8c8c8" stroke-width="0.8"/></svg>
<div class="t" style="left:2.43px;top:231.00px;font-size:9.4px;color:#222;letter-spacing:-0.282px;">Inventory Summary</div>
<div class="t" style="left:80.87px;top:234.00px;font-size:5.4px;color:#333;letter-spacing:0.205px;">(In Quantity)</div>
<div class="a" style="left:3.7999999999999545px;top:249.0px;width:70.6px;height:38.3px;background:#fff;border-radius:4px"></div>
<div class="a" style="left:80.5px;top:249.0px;width:79px;height:38.3px;background:#fff;border-radius:4px"></div>
<div class="a" style="left:9.799999999999955px;top:256.5px;width:1px;height:23px;background:#5ea4e8"></div>
<div class="a" style="left:86.70000000000005px;top:256.5px;width:1px;height:23px;background:#ef8a5a"></div>
<div class="t" style="left:13.86px;top:257.00px;font-size:5.8px;color:#555;letter-spacing:-0.101px;-webkit-text-stroke:0.1px currentColor;">In Hand</div>
<div class="t" style="left:13.69px;top:267.00px;font-size:10.4px;color:#111;font-weight:700;transform:scaleX(1.0819);transform-origin:0 0;">1046044...</div>
<div class="t" style="left:91.67px;top:257.00px;font-size:5.8px;color:#555;letter-spacing:0.218px;-webkit-text-stroke:0.1px currentColor;">To Be Received</div>
<div class="t" style="left:91.53px;top:267.00px;font-size:10.4px;color:#111;font-weight:700;transform:scaleX(1.1292);transform-origin:0 0;">356</div>
<div class="t" style="left:2.73px;top:306.00px;font-size:9.4px;color:#222;letter-spacing:-0.238px;">Product Details</div>
<div class="a" style="left:0px;top:322.1px;width:163.5px;height:33.19999999999999px;background:#f4f4f4;border-top:1px solid #e6e6e6"></div>
<div class="t" style="left:5.29px;top:337.00px;font-size:5px;color:#ee5a60;letter-spacing:-0.341px;">Dashboard</div>
<div class="t" style="left:36.22px;top:337.00px;font-size:5px;color:#444;letter-spacing:-0.370px;">Sales Orders</div>
<div class="t" style="left:71.69px;top:337.00px;font-size:5px;color:#444;letter-spacing:-0.424px;">Packages</div>
<div class="t" style="left:108.04px;top:337.00px;font-size:5px;color:#444;letter-spacing:-0.146px;">Items</div>
<div class="t" style="left:142.09px;top:337.00px;font-size:5px;color:#444;letter-spacing:-0.586px;">More</div>
<svg style="left:11.700000000000045px;top:327.1px" width="9" height="7" viewBox="0 0 9 7"><path d="M0 7 L0 4.5 A4.5 4.5 0 0 1 9 4.5 L9 7 Z" fill="#e5262b"/><path d="M4.5 3.6 L4.5 5.6" stroke="#fff" stroke-width="0.7"/></svg>
<svg style="left:42.5px;top:323.5px" width="14" height="13" viewBox="0 0 14 13"><g fill="none" stroke="#555" stroke-width="0.7"><path d="M0.5 0.8 L2 1 L3.6 8 L11.4 8 L12.6 3 L2.8 3"/><circle cx="4.6" cy="10.8" r="0.9"/><circle cx="10.6" cy="10.8" r="0.9"/><path d="M6 5.2 L9 5.2"/></g></svg>
<svg style="left:75.5px;top:324.0px" width="12" height="12" viewBox="0 0 12 12"><g fill="none" stroke="#555" stroke-width="0.7"><rect x="1.5" y="1.5" width="9" height="9"/><path d="M4.5 1.5 L4.5 4.5 L7.5 4.5 L7.5 1.5"/></g></svg>
<svg style="left:107.5px;top:324.0px" width="13" height="12" viewBox="0 0 13 12"><g fill="none" stroke="#555" stroke-width="0.7"><path d="M1 5 L12 5 L11 10.5 L2 10.5 Z"/><path d="M3.5 5 L4.5 2 L8.5 2 L9.5 5"/><path d="M5 7.5 L8 7.5"/></g></svg>
<svg style="left:140.5px;top:328.5px" width="13" height="4" viewBox="0 0 13 4"><g fill="none" stroke="#555" stroke-width="0.7"><circle cx="2" cy="2" r="1.3"/><circle cx="6.5" cy="2" r="1.3"/><circle cx="11" cy="2" r="1.3"/></g></svg>
<div class="a" style="left:52.5px;top:350.5px;width:58.2px;height:1.8px;background:#3a3a3a;border-radius:1px"></div>
</div>
<div class="a" style="left:0px;top:0px;width:1124px;height:8px;background:#000;z-index:100"></div>
<div class="a" style="left:0px;top:8px;width:16px;height:8px;background:#000;z-index:100"></div>
<div class="a" style="left:1064px;top:8px;width:60px;height:8px;background:#000;z-index:100"></div>
<div class="a" style="left:0px;top:16px;width:8px;height:32px;background:#000;z-index:100"></div>
<div class="a" style="left:1072px;top:16px;width:52px;height:16px;background:#000;z-index:100"></div>
<div class="a" style="left:1080px;top:32px;width:44px;height:240px;background:#000;z-index:100"></div>
<div class="a" style="left:1088px;top:272px;width:36px;height:8px;background:#000;z-index:100"></div>
<div class="a" style="left:1104px;top:280px;width:20px;height:16px;background:#000;z-index:100"></div>
<div class="a" style="left:1112px;top:296px;width:12px;height:16px;background:#000;z-index:100"></div>
<div class="a" style="left:1120px;top:312px;width:4px;height:352px;background:#000;z-index:100"></div>
<div class="a" style="left:0px;top:648px;width:8px;height:32px;background:#000;z-index:100"></div>
<div class="a" style="left:1112px;top:664px;width:12px;height:8px;background:#000;z-index:100"></div>
<div class="a" style="left:1104px;top:672px;width:20px;height:8px;background:#000;z-index:100"></div>
<div class="a" style="left:0px;top:680px;width:16px;height:8px;background:#000;z-index:100"></div>
<div class="a" style="left:1096px;top:680px;width:28px;height:8px;background:#000;z-index:100"></div>
<div class="a" style="left:0px;top:688px;width:24px;height:8px;background:#000;z-index:100"></div>
<div class="a" style="left:1080px;top:688px;width:44px;height:8px;background:#000;z-index:100"></div>
<div class="a" style="left:0px;top:696px;width:960px;height:1px;background:#000;z-index:100"></div>
<div class="a" style="left:1040px;top:696px;width:84px;height:1px;background:#000;z-index:100"></div>
</body></html>
